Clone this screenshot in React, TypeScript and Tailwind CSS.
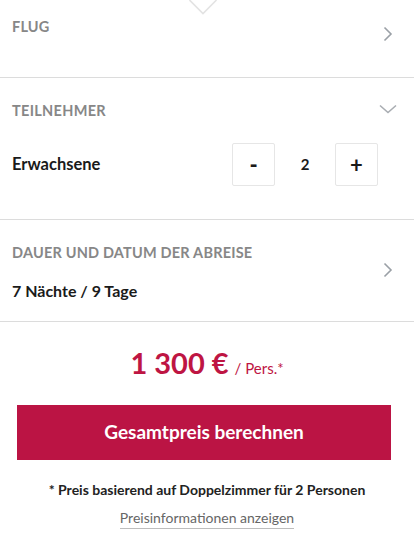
import React from "react";

const ChevronRight = () => (
  <svg width="10" height="16" viewBox="0 0 10 16" fill="none">
    <path d="M1.5 1.5 L8 8 L1.5 14.5" stroke="#9aa0a6" strokeWidth="1.6" />
  </svg>
);

const ChevronDown = () => (
  <svg width="18" height="10" viewBox="0 0 18 10" fill="none">
    <path d="M1 1.5 L9 8.5 L17 1.5" stroke="#a9adb2" strokeWidth="1.6" />
  </svg>
);

export default function App() {
  return (
    <div className="relative w-[414px] h-[552px] bg-white overflow-hidden text-[#1a1a1a]" style={{ fontFamily: "Lato, 'Open Sans', sans-serif" }}>
      <svg className="absolute left-[189px] top-0" width="30" height="15" viewBox="0 0 30 15" fill="none">
        <path d="M0.5 0 L14 13.5 L27.5 0" stroke="#e3e3e3" strokeWidth="1.6" />
      </svg>

      {/* FLUG */}
      <div className="flex items-center justify-between h-[78px] pl-3 pr-[21px] border-b border-[#dcdcdc]">
        <div className="self-start pt-[16px] text-[14.5px] font-bold text-[#878787] tracking-[0.2px]">FLUG</div>
        <div className="mb-[10px]"><ChevronRight /></div>
      </div>

      {/* TEILNEHMER */}
      <div className="h-[142px] pl-3 pr-[17px] border-b border-[#dcdcdc]">
        <div className="flex items-center justify-between pt-[22px]">
          <div className="text-[14.5px] font-bold text-[#878787] tracking-[0.3px]">TEILNEHMER</div>
          <div className="-mt-[4px]"><ChevronDown /></div>
        </div>
        <div className="flex items-center justify-between mt-[21px] pr-[19px]">
          <div className="text-[16.5px] font-bold text-[#1a1a1a]">Erwachsene</div>
          <div className="flex items-center">
            <button className="w-[43px] h-[43px] flex items-center justify-center border border-[#e6e6e6] rounded-[2px] bg-white text-[22px] font-black text-[#1a1a1a]">-</button>
            <div className="w-[60px] text-center text-[15px] font-bold">2</div>
            <button className="w-[43px] h-[43px] flex items-center justify-center border border-[#e6e6e6] rounded-[2px] bg-white text-[22px] font-bold text-[#1a1a1a]">+</button>
          </div>
        </div>
      </div>

      {/* DAUER */}
      <div className="flex items-center justify-between h-[102px] pl-3 pr-[21px] border-b border-[#dcdcdc]">
        <div className="flex flex-col pt-[4px]">
          <div className="text-[14.5px] font-bold text-[#878787] tracking-[0.2px]">DAUER UND DATUM DER ABREISE</div>
          <div className="mt-[16px] text-[16px] font-bold text-[#1a1a1a]">7 Nächte / 9 Tage</div>
        </div>
        <div className="mb-[2px]"><ChevronRight /></div>
      </div>

      {/* Price */}
      <div className="flex items-baseline justify-center mt-[21px]">
        <span className="text-[29px] font-bold text-[#be1543] leading-[40px]">1 300 €</span>
        <span className="ml-[6px] text-[15px] text-[#be1543]">/ Pers.*</span>
      </div>

      <div className="pl-[17px] pr-[23px] mt-[22px]">
        <button className="w-full h-[55px] bg-[#bb1444] text-white text-[19px] font-bold">Gesamtpreis berechnen</button>
      </div>

      <div className="mt-[19px] text-center text-[14px] font-bold text-[#222]">* Preis basierend auf Doppelzimmer für 2 Personen</div>
      <div className="mt-[9px] flex justify-center">
        <span className="text-[14px] text-[#666] border-b border-[#bdbdbd] leading-[18px] pb-[1px]">Preisinformationen anzeigen</span>
      </div>
    </div>
  );
}
